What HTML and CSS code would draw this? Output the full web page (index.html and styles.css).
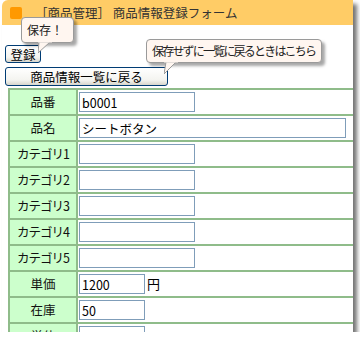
FILE: index.html
```html
<!DOCTYPE html>
<html lang="ja">
<head>
    <meta charset="UTF-8">
    <title>商品情報登録フォーム</title>
    <link rel="stylesheet" href="styles.css">
</head>
<body>
    <div class="frame">
        <div class="header">
            <span class="header-icon"></span>
            <span class="header-title">［商品管理］ 商品情報登録フォーム</span>
        </div>

        <div class="actions">
            <button class="btn btn-save">登録</button>
            <button class="btn btn-back">商品情報一覧に戻る</button>
        </div>

        <!-- balloons -->
        <div class="balloon balloon-save">
            保存！
            <svg class="tail" width="14" height="12" viewBox="0 0 14 12"><polygon points="1,0 12,0 0,11" fill="#fff6f0" stroke="#9a9a9a" stroke-width="1"/><rect x="0" y="-1" width="14" height="1.5" fill="#fff6f0"/></svg>
        </div>
        <div class="balloon balloon-back">
            保存せずに一覧に戻るときはこちら
            <svg class="tail" width="14" height="13" viewBox="0 0 14 13"><polygon points="2,0 12,0 0,12" fill="#fff6f0" stroke="#9a9a9a" stroke-width="1"/><rect x="0" y="-1" width="14" height="1.5" fill="#fff6f0"/></svg>
        </div>

        <table class="form-table">
            <tr><th>品番</th><td><input type="text" class="inp" value="b0001"></td></tr>
            <tr><th>品名</th><td><input type="text" class="inp inp-wide" value="シートボタン"></td></tr>
            <tr><th>カテゴリ1</th><td><input type="text" class="inp"></td></tr>
            <tr><th>カテゴリ2</th><td><input type="text" class="inp"></td></tr>
            <tr><th>カテゴリ3</th><td><input type="text" class="inp"></td></tr>
            <tr><th>カテゴリ4</th><td><input type="text" class="inp"></td></tr>
            <tr><th>カテゴリ5</th><td><input type="text" class="inp"></td></tr>
            <tr><th>単価</th><td><input type="text" class="inp inp-short" value="1200"><span class="unit">円</span></td></tr>
            <tr><th>在庫</th><td><input type="text" class="inp inp-short" value="50"></td></tr>
            <tr><th>単位</th><td><input type="text" class="inp inp-short"></td></tr>
        </table>
    </div>
</body>
</html>
```

FILE: styles.css
```css
body {
    margin: 0;
    background-color: #fff;
    font-family: "Noto Sans CJK JP", "DejaVu Sans", sans-serif;
    font-size: 12px;
    color: #000;
}
.frame {
    position: relative;
    width: 351px;
    height: 332px;
    margin-left: 2px;
    overflow: hidden;
    background-color: #fff;
    border-radius: 6px 0 0 0;
    box-shadow: 4px 4px 4px rgba(0,0,0,0.55);
}
.header {
    height: 25px;
    background-color: #ffcc66;
    display: flex;
    align-items: center;
    padding-left: 8px;
}
.header-icon {
    width: 12px;
    height: 12px;
    background-color: #ff9900;
    border-radius: 2px;
    margin-right: 13px;
}
.header-title {
    color: #333;
    font-size: 12.5px;
    line-height: 25px;
}
.actions {
    padding: 20px 0 0 3px;
    display: flex;
    flex-direction: column;
    align-items: flex-start;
    gap: 4px;
}
.btn {
    font-family: inherit;
    font-size: 12.5px;
    color: #000;
    border: 1px solid #003c74;
    border-radius: 3px;
    background: linear-gradient(#ffffff, #f4f4f0 70%, #d8d6cc);
    padding: 0 3px;
    line-height: 15px;
    height: 18px;
}
.btn-save {
    width: 36px;
    height: 18px;
}
.btn-back {
    width: 163px;
    height: 19px;
}
.balloon {
    position: absolute;
    background-color: #fff6f0;
    border: 1px solid #9a9a9a;
    border-radius: 4px;
    box-shadow: 3px 3px 3px rgba(0,0,0,0.35);
    font-size: 12px;
    line-height: 22px;
    padding: 0 4px;
    color: #222;
    white-space: nowrap;
}
.balloon .tail {
    position: absolute;
    top: 22px;
    display: block;
}
.balloon-save {
    left: 19px;
    top: 17px;
    width: 42px;
    height: 24px;
    line-height: 24px;
    padding: 0 4px 0 5px;
}
.balloon-save .tail {
    top: 24px;
    left: 16px;
}
.balloon-back {
    left: 144px;
    top: 39px;
    height: 22px;
    padding: 0 6px 0 5px;
    letter-spacing: -1.8px;
}
.balloon-back .tail {
    left: 17px;
}
.form-table {
    border-collapse: collapse;
    margin: 2px 0 0 6px;
    width: 351px;
    border: 2px solid #8fbc8a;
}
.form-table th,
.form-table td {
    border: 2px solid #8fbc8a;
    height: 24px;
    padding: 0;
    line-height: 20px;
}
.form-table th {
    width: 66px;
    background-color: #ccffcc;
    font-weight: normal;
    font-size: 12.5px;
    text-align: center;
    color: #111;
    white-space: nowrap;
}
.form-table tr:nth-child(n+3):nth-child(-n+7) th {
    letter-spacing: -1px;
}
.form-table td {
    background-color: #fff;
    padding-left: 1px;
    border-right: none;
}
.inp {
    width: 116px;
    height: 20px;
    box-sizing: border-box;
    border: 1px solid #7f9db9;
    padding: 0 2px;
    font-family: inherit;
    font-size: 12.5px;
    vertical-align: top;
}
.inp-wide {
    width: 267px;
}
.inp-short {
    width: 66px;
}
.unit {
    margin-left: 2px;
    font-size: 13px;
}
```
